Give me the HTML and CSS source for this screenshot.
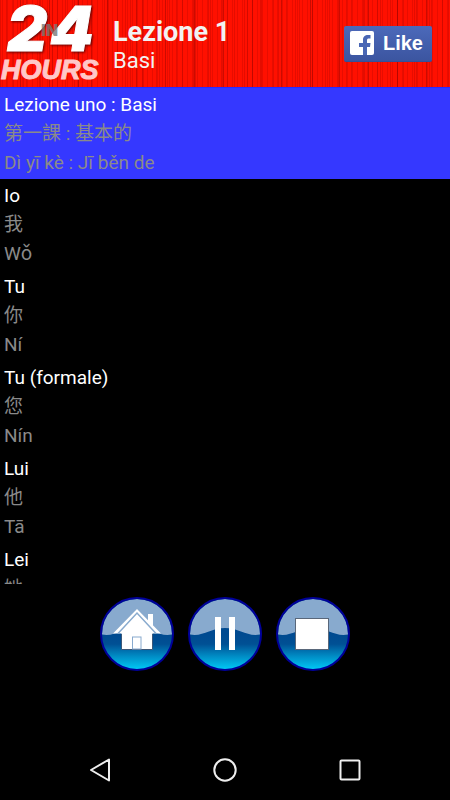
FILE: index.html
```html
<!DOCTYPE html>
<html lang="it">

<head>
    <meta charset="UTF-8">
    <meta name="viewport" content="width=device-width, initial-scale=1.0">
    <title>Lezione 1 - Basi</title>
    <link rel="stylesheet" href="styles.css">
</head>

<body>
    <header class="header">
        <!-- logo -->
        <svg class="logo" viewBox="0 0 104 87" role="img" aria-label="In 24 hours">
            <text class="logo-number" y="51"><tspan x="7">2</tspan><tspan x="50">4</tspan></text>
            <text class="logo-in" x="41" y="36">IN</text>
            <text class="logo-hours" x="1" y="79">HOURS</text>
        </svg>
        <div class="heading">
            <h1>Lezione 1</h1>
            <p>Basi</p>
        </div>
        <button class="like" type="button">
            <svg viewBox="0 0 26 26" width="26" height="26" aria-hidden="true">
                <rect x="1" y="1" width="24" height="24" rx="2" fill="#fff" />
                <path d="M14 25v-8h-4v-4h4v-3c0-3.500 2-5 5-5h2.500v3.500H20c-1.500 0-2 .6-2 2V13h3.500l-.5 4h-3v8z" fill="#4a67b5" />
            </svg>
            <span>Like</span>
        </button>
    </header>

    <!-- phrase list -->
    <ul class="list">
        <li class="row active">
            <p class="it">Lezione uno : Basi</p>
            <p lang="zh-Hant">第一課 : 基本的</p>
            <p>Dì yī kè : Jī běn de</p>
        </li>
        <li class="row">
            <p class="it">Io</p>
            <p lang="zh-Hant">我</p>
            <p>Wǒ</p>
        </li>
        <li class="row">
            <p class="it">Tu</p>
            <p lang="zh-Hant">你</p>
            <p>Ní</p>
        </li>
        <li class="row">
            <p class="it">Tu (formale)</p>
            <p lang="zh-Hant">您</p>
            <p>Nín</p>
        </li>
        <li class="row">
            <p class="it">Lui</p>
            <p lang="zh-Hant">他</p>
            <p>Tā</p>
        </li>
        <li class="row">
            <p class="it">Lei</p>
            <p lang="zh-Hant">她</p>
        </li>
    </ul>

    <!-- player buttons -->
    <div class="controls">
        <button class="round" type="button" aria-label="Home">
            <svg viewBox="0 0 74 74">
                <defs>
                    <linearGradient id="water" x1="0" y1="0" x2="0" y2="1">
                        <stop offset="0.5" stop-color="#004a90" />
                        <stop offset="0.64" stop-color="#005094" />
                        <stop offset="0.82" stop-color="#0090c8" />
                        <stop offset="1" stop-color="#00ccf8" />
                    </linearGradient>
                    <clipPath id="disc">
                        <circle cx="37" cy="37" r="35" />
                    </clipPath>
                    <g id="ball">
                        <circle cx="37" cy="37" r="36" fill="url(#water)" />
                        <path d="M0 37V0h74v37c-14 4-22-6-37-6S14 41 0 37z" fill="#88aace" clip-path="url(#disc)" />
                        <circle cx="37" cy="37" r="36" fill="none" stroke="#000099" stroke-width="2" />
                    </g>
                </defs>
                <use href="#ball" />
                <path d="M48 26v-9h5v14z" fill="#fff" />
                <path d="M13 36.500 37 12l24 24.500h-8.500V52.500h-31v-16z" fill="#fff" />
                <path d="M21.500 37v15.500h31V37" fill="none" stroke="#3c5878" stroke-width="1" />
                <path d="M18 36.500 37 16l19 20.500" fill="none" stroke="#88aace" stroke-width="1.500" />
                <rect x="32.500" y="40" width="8.500" height="12" fill="#fff" stroke="#88aace" stroke-width="1" />
            </svg>
        </button>
        <button class="round" type="button" aria-label="Pausa">
            <svg viewBox="0 0 74 74">
                <use href="#ball" />
                <path d="M27 20h6v33h-6zM41 20h6v33h-6z" fill="#fff" />
            </svg>
        </button>
        <button class="round" type="button" aria-label="Stop">
            <svg viewBox="0 0 74 74">
                <use href="#ball" />
                <rect x="19.500" y="21.500" width="33" height="31" fill="#fff" stroke="#59677a" />
            </svg>
        </button>
    </div>

    <!-- system navigation bar -->
    <nav class="navbar">
        <button type="button" aria-label="Indietro">
            <svg viewBox="0 0 26 26">
                <path d="M4 13 22 2.500v21z" />
            </svg>
        </button>
        <button type="button" aria-label="Schermata Home">
            <svg viewBox="0 0 26 26">
                <circle cx="13" cy="13" r="10.700" />
            </svg>
        </button>
        <button type="button" aria-label="Recenti">
            <svg viewBox="0 0 26 26">
                <rect x="3.500" y="3.500" width="19" height="19" rx="1" />
            </svg>
        </button>
    </nav>
</body>

</html>
```
FILE: styles.css
```css
* {
    box-sizing: border-box;
    margin: 0;
    padding: 0;
}

body {
    display: flex;
    flex-direction: column;
    height: 100vh;
    background-color: #000;
    color: #8a8a8a;
    font-family: Roboto, "Noto Sans CJK TC", sans-serif;
}

button {
    border: none;
    background: none;
    cursor: pointer;
}

svg {
    display: block;
}

/* header */
.header {
    display: flex;
    align-items: center;
    flex-shrink: 0;
    height: 88px;
    padding-right: 18px;
    border-bottom: 1px solid #2a2aff;
    /* vertical stripes of different periods laid over red */
    background:
        repeating-linear-gradient(90deg, rgba(120, 0, 0, 0.2) 0 1px, transparent 1px 13px),
        repeating-linear-gradient(90deg, transparent 0 6px, rgba(150, 0, 0, 0.25) 6px 7px, transparent 7px 17px),
        repeating-linear-gradient(90deg, transparent 0 2px, rgba(140, 0, 0, 0.2) 2px 3px, transparent 3px 5px),
        repeating-linear-gradient(90deg, transparent 0 20px, rgba(110, 0, 0, 0.35) 20px 21px, transparent 21px 29px),
        #ff1000;
}

.logo {
    width: 104px;
    height: 87px;
    font-family: Inter, "Liberation Sans", sans-serif;
    font-style: italic;
    font-weight: 900;
}

.logo-number {
    font-size: 62px;
    fill: #fff;
    stroke: #fff;
    stroke-width: 1px;
    filter: drop-shadow(1px 1px 1px rgba(60, 0, 0, 0.8));
}

.logo-in {
    font-size: 16px;
    font-style: normal;
    fill: #777;
    fill-opacity: 0.8;
}

.logo-hours {
    font-family: "Liberation Sans", sans-serif;
    font-size: 27px;
    fill: #ffc8c8;
    stroke: #ffc8c8;
    stroke-width: 1px;
}

.heading {
    flex: 1;
    padding: 5px 0 0 9px;
    color: #f2f2f2;
}

.heading h1 {
    font-size: 27px;
    line-height: 30px;
}

.heading p {
    font-size: 22px;
    line-height: 28px;
}

.like {
    display: flex;
    align-items: center;
    gap: 8px;
    height: 36px;
    padding: 0 9px 0 5px;
    border-bottom: 1px solid #34509a;
    border-radius: 2px;
    background: linear-gradient(#4c69ba, #3b55a0);
    color: #fff;
    font: bold 20px "Liberation Sans", sans-serif;
}

/* list */
.list {
    flex: 1;
    min-height: 0;
    overflow: hidden;
    list-style: none;
}

.row {
    height: 91px;
    padding: 2px 4px;
    font-size: 19px;
    line-height: 29px;
}

.active {
    background-color: #3538ff;
}

.it {
    color: #fff;
}

/* player */
.controls {
    display: flex;
    justify-content: center;
    flex-shrink: 0;
    gap: 14px;
    padding: 13px 0 69px;
}

.round {
    width: 74px;
    height: 74px;
    border-radius: 50%;
}

/* navigation bar */
.navbar {
    display: flex;
    justify-content: center;
    align-items: center;
    flex-shrink: 0;
    gap: 99px;
    height: 60px;
}

.navbar svg {
    width: 26px;
    height: 26px;
    fill: none;
    stroke: #eee;
    stroke-width: 2;
    stroke-linejoin: round;
}
```
